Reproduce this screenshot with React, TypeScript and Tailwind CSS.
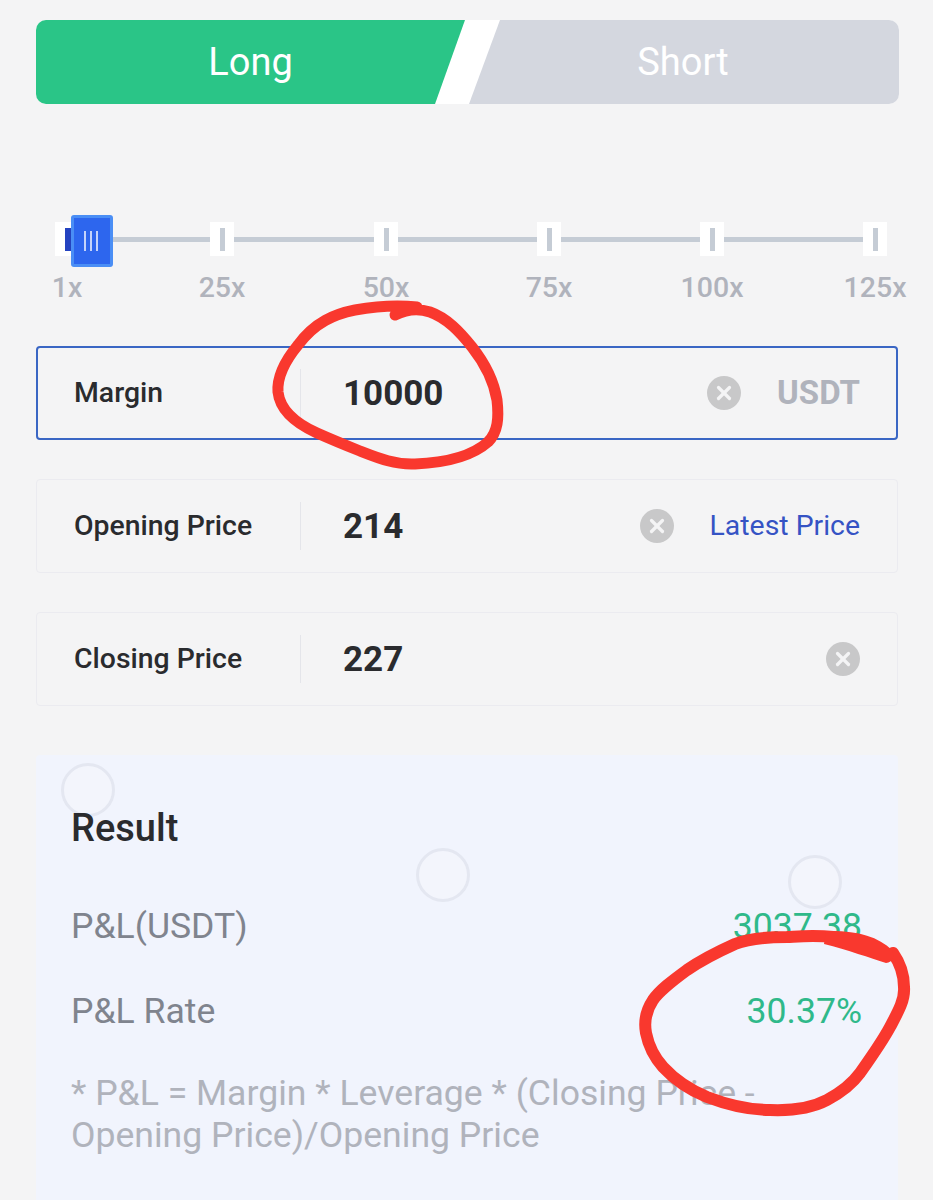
import { X } from "lucide-react";

interface PriceRowProps {
  label: string;
  value: string;
  active?: boolean;
  suffix?: string;
  suffixClass?: string;
}

const stops = [
  { label: "1x", gap: 0 },
  { label: "25x", gap: 131 },
  { label: "50x", gap: 140 },
  { label: "75x", gap: 139 },
  { label: "100x", gap: 139 },
  { label: "125x", gap: 139 },
];

const gapClass: Record<number, string> = {
  0: "ml-0",
  131: "ml-[131px]",
  140: "ml-[140px]",
  139: "ml-[139px]",
};

const trackClass: Record<number, string> = {
  0: "hidden",
  131: "w-[131px]",
  140: "w-[140px]",
  139: "w-[139px]",
};

const ClearButton = () => (
  <div className="flex h-[34px] w-[34px] shrink-0 items-center justify-center rounded-full bg-[#c8c8c9]">
    <X size={22} strokeWidth={3.5} className="text-[#f4f4f5]" />
  </div>
);

const PriceRow = ({ label, value, active, suffix, suffixClass }: PriceRowProps) => (
  <div
    className={`flex h-[94px] items-center rounded-[4px] ${
      active ? "border-2 border-[#3a66c4] px-[36px]" : "border border-[#ebebf0] px-[37px]"
    }`}
  >
    <div className="w-[226px] shrink-0 text-[28.4px] font-medium text-[#2a2b2e]">{label}</div>
    <div className="flex h-[48px] flex-1 items-center border-l border-[#e4e5ea] pl-[42px] pt-[2px] text-[35px] font-bold text-[#2a2b2e]">
      {value}
    </div>
    <ClearButton />
    {suffix && <div className={`ml-[36px] ${suffixClass}`}>{suffix}</div>}
  </div>
);

const Ripple = ({ className }: { className: string }) => (
  <div className={`absolute h-[54px] w-[54px] rounded-full border-[3px] border-[#e4e7f1] bg-[#f3f5fc] ${className}`} />
);

export default function App() {
  return (
    <div className="relative h-[1200px] w-[933px] overflow-hidden bg-[#f4f4f5] font-['Roboto',sans-serif]">
      <div className="px-[36px] pt-[20px] pr-[34px]">
        {/* LONG / SHORT */}
        <div className="flex h-[84px] overflow-hidden rounded-[10px] bg-white">
          <div className="flex w-[429px] items-center justify-center bg-[#2ac587] text-[38px] text-white [clip-path:polygon(0_0,100%_0,399px_100%,0_100%)]">
            Long
          </div>
          <div className="ml-[4px] flex flex-1 items-center justify-center bg-[#d4d7df] pr-[2px] text-[38px] text-white [clip-path:polygon(31px_0,100%_0,100%_100%,0_100%)]">
            Short
          </div>
        </div>
      </div>

      {/* LEVERAGE SLIDER */}
      <div className="relative ml-[55px] mt-[118px]">
        <div className="flex h-[34px] items-center">
          {stops.map((s, i) => (
            <div key={s.label} className="flex items-center">
              <div className={`h-[5px] bg-[#c5ccd5] ${trackClass[s.gap]}`} />
              <div className="flex h-[34px] w-[24px] items-center justify-center bg-white">
                <div className={i === 0 ? "ml-[-2px] mr-auto h-[23px] w-[8px] translate-x-[12px] bg-[#2443c0]" : "h-[23px] w-[5px] bg-[#c5ccd5]"} />
              </div>
            </div>
          ))}
        </div>
        <div className="absolute left-[16px] top-[-7px] flex h-[52px] w-[42px] items-center justify-center gap-[4px] rounded-[3px] border-[3px] border-[#4a8ef5] bg-[#2d66ee] pr-[2px]">
          <div className="h-[20px] w-[2px] bg-[#c4d3fa]" />
          <div className="h-[20px] w-[2px] bg-[#c4d3fa]" />
          <div className="h-[20px] w-[2px] bg-[#c4d3fa]" />
        </div>
        <div className="mt-[16px] flex h-[32px] items-center">
          {stops.map((s) => (
            <div
              key={s.label}
              className={`flex w-[24px] justify-center whitespace-nowrap text-[28.5px] font-medium leading-none text-[#b0b3bc] ${gapClass[s.gap]}`}
            >
              {s.label}
            </div>
          ))}
        </div>
      </div>

      {/* INPUTS */}
      <div className="mt-[42px] flex flex-col gap-[39px] pl-[36px] pr-[35px]">
        <PriceRow
          label="Margin"
          value="10000"
          active
          suffix="USDT"
          suffixClass="text-[33px] font-bold text-[#b0b3bc]"
        />
        <PriceRow
          label="Opening Price"
          value="214"
          suffix="Latest Price"
          suffixClass="text-[28.4px] text-[#3553c4]"
        />
        <PriceRow label="Closing Price" value="227" />
      </div>

      {/* RESULT */}
      <div className="relative ml-[36px] mr-[35px] mt-[49px] h-[460px] rounded-t-[4px] bg-[#f1f4fd] pl-[35px] pr-[36px] pt-[49px]">
        <Ripple className="left-[25px] top-[8px]" />
        <Ripple className="left-[380px] top-[93px]" />
        <Ripple className="left-[752px] top-[100px]" />
        <div className="relative text-[38px] font-medium leading-[48px] text-[#2a2b2e]">Result</div>
        <div className="relative mt-[51px] flex h-[48px] items-center justify-between text-[35.6px] text-[#80848e]">
          <span>P&amp;L(USDT)</span>
          <span className="text-[#2fb98a]">3037.38</span>
        </div>
        <div className="mt-[37px] flex h-[48px] items-center justify-between text-[35.6px] text-[#80848e]">
          <span>P&amp;L Rate</span>
          <span className="text-[#2fb98a]">30.37%</span>
        </div>
        <div className="mt-[36px] text-[35.6px] leading-[42px] text-[#b0b3bc]">
          * P&amp;L = Margin * Leverage * (Closing Price -<br />
          Opening Price)/Opening Price
        </div>
      </div>

      {/* hand drawn marks on top of the screenshot */}
      <svg className="absolute left-0 top-0" width="933" height="1200" viewBox="0 0 933 1200" fill="none">
        <path
          d="M417 307C400 305 377 306 355 310C335 314 315 322 298 345C284 362 277 378 278 392C280 410 295 423 317 433C335 441 345 445 360 451C378 458 395 465 415 464C440 463 470 458 488 442C498 432 499 418 497 400C494 382 487 366 472 347C460 332 447 318 430 312C418 308 405 310 395 315"
          stroke="#f9382e"
          strokeWidth="11"
          strokeLinecap="round"
        />
        <path
          d="M887 955C865 945 850 939 833 937C815 935 805 936 787 937C770 937 750 938 735 944C715 953 700 961 687 970C672 981 660 990 653 1000C645 1012 644 1022 646 1033C649 1048 655 1058 663 1067C675 1080 690 1090 707 1097C728 1105 750 1110 770 1110C795 1111 812 1108 827 1100C842 1092 852 1084 860 1073C872 1056 882 1042 890 1027C898 1012 905 1000 904 987C904 973 900 963 893 953"
          stroke="#f9382e"
          strokeWidth="12"
          strokeLinecap="round"
        />
        <path d="M826 931C855 930 878 936 892 950C895 957 893 962 886 963C870 958 848 950 824 944Z" fill="#f9382e" />
      </svg>
    </div>
  );
}
